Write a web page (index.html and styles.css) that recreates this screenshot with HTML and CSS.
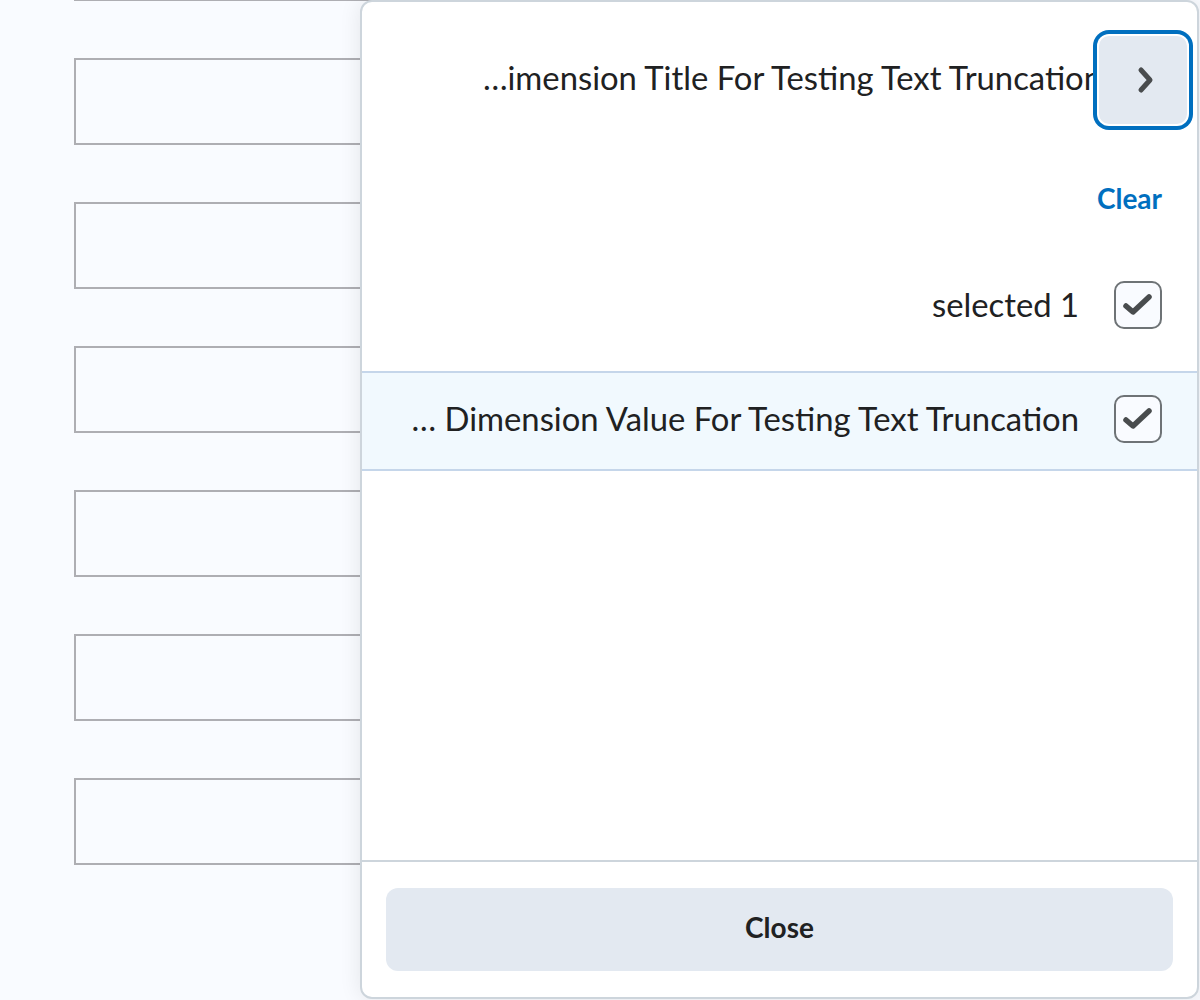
FILE: index.html
```html
<!DOCTYPE html>
<html lang="en">
<head>
<meta charset="utf-8">
<title>Filter dropdown</title>
<link rel="stylesheet" href="styles.css">
</head>
<body>
  <div class="page-content">
    <div class="box"></div>
    <div class="box"></div>
    <div class="box"></div>
    <div class="box"></div>
    <div class="box"></div>
    <div class="box"></div>
    <div class="box"></div>
  </div>

  <div class="panel">
    <div class="header">
      <div class="title"><span class="title-text">…imension Title For Testing Text Truncation</span></div>
      <button class="icon-btn" aria-label="Open">
        <svg width="88" height="88" viewBox="0 0 88 88" aria-hidden="true">
          <path d="M42 34 L51 44 L42 54" fill="none" stroke="#494c4e" stroke-width="5" stroke-linecap="round" stroke-linejoin="round"/>
        </svg>
      </button>
    </div>
    <div class="clear-row"><a class="clear-link">Clear</a></div>
    <div class="option option-summary">
      <span class="option-text">selected 1</span>
      <span class="checkbox">
        <svg width="44" height="44" viewBox="0 0 44 44" aria-hidden="true">
          <path d="M10 23 L17 29 L33 14" fill="none" stroke="#494c4e" stroke-width="5.5" stroke-linecap="round" stroke-linejoin="round"/>
        </svg>
      </span>
    </div>
    <div class="list">
      <div class="option option-item">
        <span class="option-text">… Dimension Value For Testing Text Truncation</span>
        <span class="checkbox">
          <svg width="44" height="44" viewBox="0 0 44 44" aria-hidden="true">
            <path d="M10 23 L17 29 L33 14" fill="none" stroke="#494c4e" stroke-width="5.5" stroke-linecap="round" stroke-linejoin="round"/>
          </svg>
        </span>
      </div>
    </div>
    <div class="spacer"></div>
    <div class="footer">
      <button class="close-btn">Close</button>
    </div>
  </div>
</body>
</html>
```

FILE: styles.css
```css
html, body {
  margin: 0;
  padding: 0;
}

body {
  background: #f9fbff;
  font-family: Lato, "Noto Sans", sans-serif;
  color: #202122;
  height: 1000px;
  overflow: hidden;
  position: relative;
}

.page-content {
  display: flex;
  flex-direction: column;
  gap: 57px;
  padding-left: 74px;
  margin-top: -86px;
}

.box {
  width: 900px;
  height: 83px;
  border: 2px solid #aeaeb3;
  background: #f9fbff;
}

.panel {
  position: absolute;
  top: 0;
  left: 360px;
  width: 839px;
  height: 999px;
  box-sizing: border-box;
  background: #ffffff;
  border: 2px solid #cdd5dc;
  border-radius: 12px;
  box-shadow: 0 0 22px rgba(0, 0, 0, 0.09);
  display: flex;
  flex-direction: column;
}

.header {
  display: flex;
  align-items: center;
  padding: 34px 10px 0 0;
}

.title {
  flex: 1;
  min-width: 0;
  overflow: hidden;
  display: flex;
  justify-content: flex-end;
  font-size: 32.8px;
  line-height: 40px;
  margin-top: -4px;
}

.title-text {
  white-space: nowrap;
  margin-right: -3px;
}

.icon-btn {
  flex: none;
  width: 88px;
  height: 88px;
  padding: 0;
  border: none;
  border-radius: 10px;
  background: #e3e9f1;
  box-shadow: 0 0 0 2px #ffffff, 0 0 0 6px #006fbf;
  display: flex;
  align-items: center;
  justify-content: center;
  position: relative;
}

.clear-row {
  margin-top: 54px;
  padding-right: 35px;
  text-align: right;
  line-height: 40px;
}

.clear-link {
  color: #006fbf;
  font-weight: 700;
  font-size: 28px;
}

.option {
  display: flex;
  align-items: center;
  justify-content: flex-end;
  gap: 35px;
  padding-right: 35px;
}

.option-text {
  font-size: 32.8px;
  line-height: 40px;
  white-space: nowrap;
}

.option-summary {
  margin-top: 58px;
  padding-bottom: 42px;
}

.checkbox {
  flex: none;
  width: 48px;
  height: 48px;
  box-sizing: border-box;
  border: 2px solid #6e7376;
  border-radius: 10px;
  background: #f9fbff;
  display: flex;
  align-items: center;
  justify-content: center;
}

.list {
  border-top: 2px solid #c5d6ea;
  border-bottom: 2px solid #c5d6ea;
}

.option-item {
  background: #f1f9fe;
  padding-top: 22px;
  padding-bottom: 26px;
}

.spacer {
  flex: 1;
}

.footer {
  border-top: 2px solid #cdd5dc;
  padding: 26px 24px;
}

.close-btn {
  display: block;
  width: 100%;
  height: 83px;
  padding: 0 0 5px;
  border: none;
  border-radius: 12px;
  background: #e3e9f1;
  color: #202122;
  font-family: Lato, "Noto Sans", sans-serif;
  font-weight: 700;
  font-size: 28px;
}
```
